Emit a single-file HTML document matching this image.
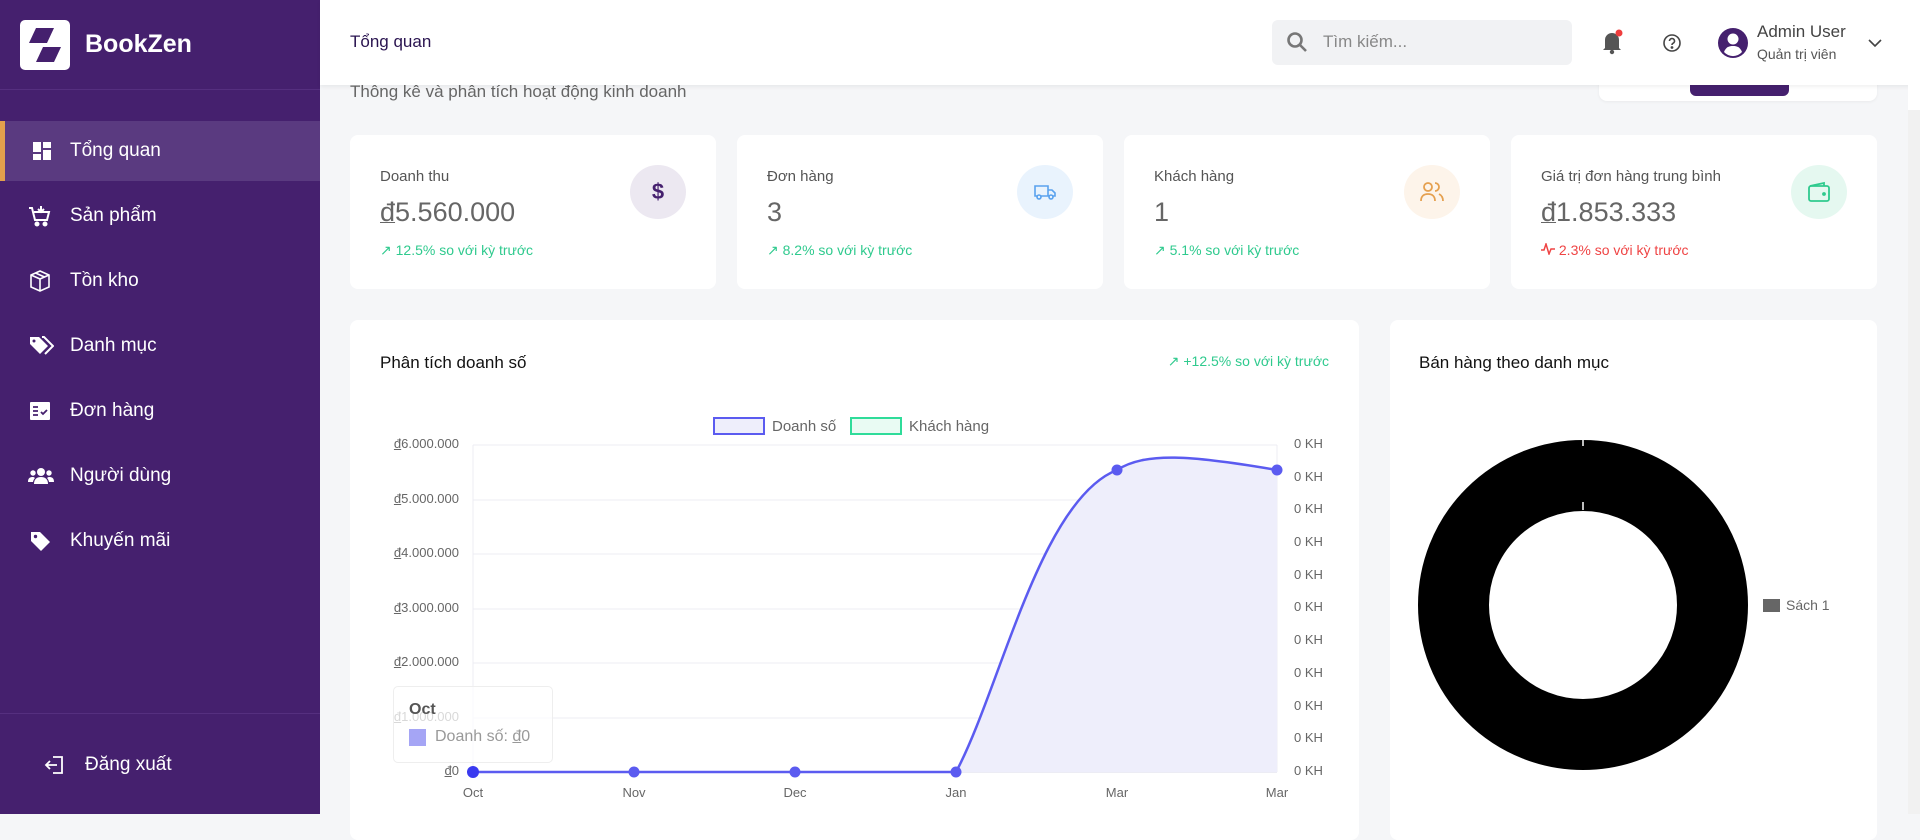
<!DOCTYPE html>
<html><head><meta charset="utf-8"><style>
*{box-sizing:border-box;margin:0;padding:0}
body{width:1920px;height:814px;overflow:hidden;background:#f5f6f8;font-family:"Liberation Sans",sans-serif;position:relative}
.sb{position:absolute;left:0;top:0;width:320px;height:814px;background:#45206e;color:#fff}
.logo{position:absolute;left:20px;top:20px;width:50px;height:50px;background:#fff;border-radius:5px}
.brand{position:absolute;left:85px;top:30px;font-size:25px;font-weight:bold}
.div1{position:absolute;left:0;top:89px;width:320px;height:1px;background:#552f7f}
.nav{position:absolute;left:0;width:320px;height:60px;font-size:19px;display:flex;align-items:center}
.nav svg{position:absolute;left:28px}
.nav span{position:absolute;left:70px}
.act{background:#5a3a80;border-left:5px solid #e2a04c}
.hdr{position:absolute;left:320px;top:0;width:1600px;height:85px;background:#fff;box-shadow:0 2px 4px rgba(0,0,0,.06)}
.card{position:absolute;background:#fff;border-radius:8px}
.lbl{position:absolute;left:30px;top:33px;font-size:15px;color:#555}
.val{position:absolute;left:30px;top:62px;font-size:27px;color:#666}
.chg{position:absolute;left:30px;top:107px;font-size:14px;color:#2fca8e}
.ic{position:absolute;right:30px;top:30px;width:56px;height:54px;border-radius:50%;display:flex;align-items:center;justify-content:center}
.yl{position:absolute;font-size:13px;color:#666;text-align:right;width:110px}
.rl{position:absolute;left:1294px;font-size:13px;color:#666}
.xl{position:absolute;top:785px;font-size:13px;color:#666;width:40px;text-align:center}
u{text-decoration-thickness:1px}
</style></head><body>
<div class="sb">
 <div class="logo"><svg width="50" height="50" viewBox="0 0 50 50"><path d="M16 8h18l-7 15H9z" fill="#45206e"/><path d="M23 27h18l-7 15H16z" fill="#45206e"/></svg></div>
 <div class="brand">BookZen</div>
 <div class="div1"></div>
 <div class="nav act" style="top:121px"><svg width="22" height="22" viewBox="0 0 22 22" style="left:26px"><rect x="2" y="2" width="8" height="10" fill="#fff"/><rect x="12" y="2" width="8" height="6" fill="#fff"/><rect x="2" y="14" width="8" height="6" fill="#fff"/><rect x="12" y="10" width="8" height="10" fill="#fff"/></svg><span style="left:65px">Tổng quan</span></div>
 <div class="nav" style="top:186px"><svg width="24" height="24" viewBox="0 0 24 24" fill="none" stroke="#fff" stroke-width="2"><path d="M1 4h3l3 12h12l2-8H6"/><circle cx="9" cy="20" r="1.5" fill="#fff"/><circle cx="17" cy="20" r="1.5" fill="#fff"/><path d="M13 2v6M10 5l3 3 3-3"/></svg><span>Sản phẩm</span></div>
 <div class="nav" style="top:251px"><svg width="24" height="24" viewBox="0 0 24 24" fill="none" stroke="#fff" stroke-width="1.6"><path d="M12 2l9 4v12l-9 4-9-4V6z"/><path d="M3 6l9 4 9-4M12 10v12M7.5 4l9 4"/></svg><span>Tồn kho</span></div>
 <div class="nav" style="top:316px"><svg width="26" height="24" viewBox="0 0 26 24"><path d="M2 3h9l9 9-8 8-10-10z" fill="#fff"/><circle cx="6" cy="7" r="1.5" fill="#45206e"/><path d="M14 3h2l9 9-8 8" fill="none" stroke="#fff" stroke-width="2"/></svg><span>Danh mục</span></div>
 <div class="nav" style="top:381px"><svg width="24" height="24" viewBox="0 0 24 24"><rect x="2" y="3" width="20" height="18" rx="1" fill="#fff"/><path d="M5 8h5M5 12h5M5 16h5M13 13l2 2 4-4" stroke="#45206e" stroke-width="1.8" fill="none"/></svg><span>Đơn hàng</span></div>
 <div class="nav" style="top:446px"><svg width="26" height="24" viewBox="0 0 26 24" fill="#fff"><circle cx="13" cy="8" r="4"/><circle cx="5" cy="9" r="2.7"/><circle cx="21" cy="9" r="2.7"/><path d="M6 20c0-5 3-7 7-7s7 2 7 7z"/><path d="M0 18c0-4 2-5 5-5 1 0 2 1 2 1-1 1-2 3-2 4z"/><path d="M26 18c0-4-2-5-5-5-1 0-2 1-2 1 1 1 2 3 2 4z"/></svg><span>Người dùng</span></div>
 <div class="nav" style="top:511px"><svg width="24" height="24" viewBox="0 0 24 24"><path d="M3 3h9l10 10-9 9L3 12z" fill="#fff"/><circle cx="7.5" cy="7.5" r="1.7" fill="#45206e"/></svg><span>Khuyến mãi</span></div>
 <div style="position:absolute;left:0;top:713px;width:320px;height:1px;background:#552f7f"></div>
 <div class="nav" style="top:735px"><svg width="22" height="22" viewBox="0 0 22 22" fill="none" stroke="#fff" stroke-width="1.8" style="left:44px"><path d="M9 3h9v16H9M2 11h11M6 7l-4 4 4 4"/></svg><span style="left:85px">Đăng xuất</span></div>
</div>

<div style="position:absolute;left:350px;top:82px;font-size:17px;color:#666">Thông kê và phân tích hoạt động kinh doanh</div>
<div class="card" style="left:1599px;top:70px;width:278px;height:31px;box-shadow:0 1px 3px rgba(0,0,0,.05)"><div style="position:absolute;left:91px;top:0;width:99px;height:26px;background:#45206e;border-radius:0 0 6px 6px"></div></div>

<div class="hdr">
 <div style="position:absolute;left:30px;top:32px;font-size:17px;color:#2a1450">Tổng quan</div>
 <div style="position:absolute;left:952px;top:20px;width:300px;height:45px;background:#f1f2f4;border-radius:6px"><svg width="22" height="22" viewBox="0 0 22 22" style="position:absolute;left:14px;top:11px" fill="none" stroke="#777" stroke-width="2.6"><circle cx="9" cy="9" r="6.5"/><path d="M14 14l6 6"/></svg><span style="position:absolute;left:51px;top:12px;font-size:17px;color:#888">Tìm kiếm...</span></div>
 <svg width="24" height="26" viewBox="0 0 24 26" style="position:absolute;left:1280px;top:29px"><path d="M5 19V11a7 7 0 0 1 14 0v8l2 2H3z" fill="#555"/><circle cx="12" cy="23" r="2.2" fill="#555"/><circle cx="19" cy="4" r="3.5" fill="#ef3d3d"/></svg>
 <svg width="20" height="20" viewBox="0 0 20 20" style="position:absolute;left:1342px;top:33px" fill="none" stroke="#444" stroke-width="1.6"><circle cx="10" cy="10" r="8"/><path d="M7.5 8a2.5 2.5 0 1 1 3.5 2.3c-.8.4-1 1-1 1.7"/><circle cx="10" cy="14.5" r=".6" fill="#444"/></svg>
 <svg width="30" height="30" viewBox="0 0 30 30" style="position:absolute;left:1398px;top:28px"><circle cx="15" cy="15" r="15" fill="#45206e"/><circle cx="15" cy="11" r="5.5" fill="#fff"/><path d="M6 24c2-5 5-6 9-6s7 1 9 6a12 12 0 0 1-18 0z" fill="#fff"/></svg>
 <div style="position:absolute;left:1437px;top:22px;font-size:17px;color:#444">Admin User</div>
 <div style="position:absolute;left:1437px;top:46px;font-size:14px;color:#555">Quản trị viên</div>
 <svg width="16" height="10" viewBox="0 0 16 10" style="position:absolute;left:1547px;top:38px" fill="none" stroke="#444" stroke-width="1.6"><path d="M2 2l6 6 6-6"/></svg>
</div>
<div style="position:absolute;left:1908px;top:85px;width:12px;height:729px;background:#f1f1f1"><div style="width:12px;height:25px;background:#fff"></div></div>

<div class="card" style="left:350px;top:135px;width:366px;height:154px"><div class="lbl">Doanh thu</div><div class="val"><u>đ</u>5.560.000</div><div class="chg">↗ 12.5% so với kỳ trước</div><div class="ic" style="background:#ece8f1;color:#45206e;font-size:22px;font-weight:bold">$</div></div>
<div class="card" style="left:737px;top:135px;width:366px;height:154px"><div class="lbl">Đơn hàng</div><div class="val">3</div><div class="chg">↗ 8.2% so với kỳ trước</div><div class="ic" style="background:#e9f3fd"><svg width="24" height="18" viewBox="0 0 24 18" fill="none" stroke="#5aa2ee" stroke-width="1.6"><path d="M2 3h13v10H2zM15 7h4l3 3v3h-7"/><circle cx="6" cy="14" r="2" fill="#e9f3fd"/><circle cx="18" cy="14" r="2" fill="#e9f3fd"/></svg></div></div>
<div class="card" style="left:1124px;top:135px;width:366px;height:154px"><div class="lbl">Khách hàng</div><div class="val">1</div><div class="chg">↗ 5.1% so với kỳ trước</div><div class="ic" style="background:#fdf4ea"><svg width="26" height="24" viewBox="0 0 26 24" fill="none" stroke="#e5a04f" stroke-width="1.8"><circle cx="9" cy="7" r="4"/><path d="M2 21c0-5 3-7 7-7s7 2 7 7M16 3a4 4 0 0 1 0 8M20 14c2 1 4 3 4 7"/></svg></div></div>
<div class="card" style="left:1511px;top:135px;width:366px;height:154px"><div class="lbl">Giá trị đơn hàng trung bình</div><div class="val"><u>đ</u>1.853.333</div><div class="chg" style="color:#ef4444"><svg width="14" height="12" viewBox="0 0 14 12" fill="none" stroke="#ef4444" stroke-width="1.5"><path d="M0 7h3l2-6 3 10 2-5h4"/></svg> 2.3% so với kỳ trước</div><div class="ic" style="background:#e5f8f0"><svg width="24" height="22" viewBox="0 0 24 22" fill="none" stroke="#2fca8e" stroke-width="1.8"><rect x="2" y="5" width="20" height="15" rx="2"/><path d="M3 5l14-3v3"/><circle cx="17" cy="13" r="1" fill="#2fca8e"/></svg></div></div>

<div class="card" style="left:350px;top:320px;width:1009px;height:520px">
 <div style="position:absolute;left:30px;top:33px;font-size:17px;color:#111">Phân tích doanh số</div>
 <div style="position:absolute;right:30px;top:33px;font-size:14px;color:#2fca8e">↗ +12.5% so với kỳ trước</div>
</div>
<svg width="1920" height="814" style="position:absolute;left:0;top:0">
 <g stroke="#ececf3" stroke-width="1">
  <line x1="473" y1="445" x2="1277" y2="445"/><line x1="473" y1="500" x2="1277" y2="500"/><line x1="473" y1="554" x2="1277" y2="554"/><line x1="473" y1="609" x2="1277" y2="609"/><line x1="473" y1="663" x2="1277" y2="663"/><line x1="473" y1="718" x2="1277" y2="718"/>
  <line x1="473" y1="445" x2="473" y2="772"/><line x1="1277" y1="445" x2="1277" y2="772"/>
 </g>
 <line x1="473" y1="772" x2="1277" y2="772" stroke="#d8d8e8"/>
 <path d="M956,772 C1000,690 1040,500 1117,470 C1145,452 1190,455 1277,470 L1277,772Z" fill="#eeeefb"/>
 <path d="M473,772 L956,772 C1000,690 1040,500 1117,470 C1145,452 1190,455 1277,470" fill="none" stroke="#5b5bf0" stroke-width="2.5"/>
 <g fill="#5b5bf0"><circle cx="473" cy="772" r="6" fill="#3a3af0"/><circle cx="634" cy="772" r="5.5"/><circle cx="795" cy="772" r="5.5"/><circle cx="956" cy="772" r="5.5"/><circle cx="1117" cy="470" r="5.5"/><circle cx="1277" cy="470" r="5.5"/></g>
 <rect x="714" y="418" width="50" height="16" fill="#eeeefb" stroke="#5b5bf0" stroke-width="2"/>
 <text x="772" y="431" font-size="15" fill="#666" font-family="Liberation Sans">Doanh số</text>
 <rect x="851" y="418" width="50" height="16" fill="#e9fbf3" stroke="#2fdc9a" stroke-width="2"/>
 <text x="909" y="431" font-size="15" fill="#666" font-family="Liberation Sans">Khách hàng</text>
</svg>
<div class="yl" style="left:349px;top:436px"><u>đ</u>6.000.000</div>
<div class="yl" style="left:349px;top:491px"><u>đ</u>5.000.000</div>
<div class="yl" style="left:349px;top:545px"><u>đ</u>4.000.000</div>
<div class="yl" style="left:349px;top:600px"><u>đ</u>3.000.000</div>
<div class="yl" style="left:349px;top:654px"><u>đ</u>2.000.000</div>
<div class="yl" style="left:349px;top:709px"><u>đ</u>1.000.000</div>
<div class="yl" style="left:349px;top:763px"><u>đ</u>0</div>
<div class="rl" style="top:436px">0 KH</div><div class="rl" style="top:469px">0 KH</div><div class="rl" style="top:501px">0 KH</div><div class="rl" style="top:534px">0 KH</div><div class="rl" style="top:567px">0 KH</div><div class="rl" style="top:599px">0 KH</div><div class="rl" style="top:632px">0 KH</div><div class="rl" style="top:665px">0 KH</div><div class="rl" style="top:698px">0 KH</div><div class="rl" style="top:730px">0 KH</div><div class="rl" style="top:763px">0 KH</div>
<div class="xl" style="left:453px">Oct</div><div class="xl" style="left:614px">Nov</div><div class="xl" style="left:775px">Dec</div><div class="xl" style="left:936px">Jan</div><div class="xl" style="left:1097px">Mar</div><div class="xl" style="left:1257px">Mar</div>
<div style="position:absolute;left:393px;top:686px;width:160px;height:77px;background:rgba(255,255,255,.75);border:1px solid #eee;border-radius:5px">
 <div style="position:absolute;left:15px;top:14px;font-size:16px;font-weight:bold;color:#555">Oct</div>
 <div style="position:absolute;left:15px;top:42px;width:17px;height:17px;background:#a5a5f5"></div>
 <div style="position:absolute;left:41px;top:41px;font-size:16px;color:#999">Doanh số: <u>đ</u>0</div>
</div>

<div class="card" style="left:1390px;top:320px;width:487px;height:520px">
 <div style="position:absolute;left:29px;top:33px;font-size:17px;color:#111">Bán hàng theo danh mục</div>
</div>
<svg width="1920" height="814" style="position:absolute;left:0;top:0"><circle cx="1583" cy="605" r="129.5" fill="none" stroke="#000" stroke-width="71"/><line x1="1583" y1="440" x2="1583" y2="446" stroke="#fff" stroke-width="1.5"/><line x1="1583" y1="502" x2="1583" y2="510" stroke="#fff" stroke-width="1.5"/><rect x="1763" y="599" width="17" height="13" fill="#666"/></svg>
<div style="position:absolute;left:1786px;top:597px;font-size:14px;color:#666">Sách 1</div>
</body></html>
